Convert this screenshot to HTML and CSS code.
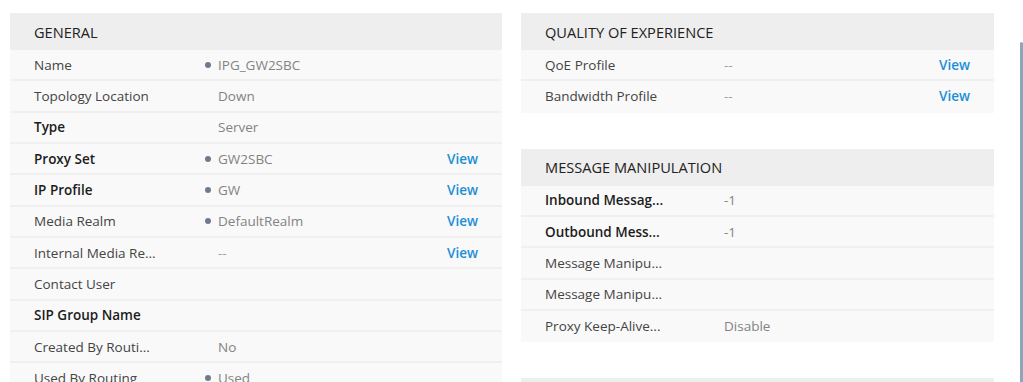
FILE: index.html
```html
<!DOCTYPE html>
<html lang="en">
<head>
  <meta charset="UTF-8">
  <title>SIP Interface Details</title>
  <link rel="stylesheet" href="styles.css">
</head>
<body>

  <div class="page">
    <div class="column column-left">
      <div class="panel">
        <div class="panel-title">GENERAL</div>
        <div class="row"><span class="label">Name</span><span class="value"><i class="dot"></i>IPG_GW2SBC</span></div>
        <div class="row"><span class="label">Topology Location</span><span class="value"><i class="slot"></i>Down</span></div>
        <div class="row"><span class="label strong">Type</span><span class="value"><i class="slot"></i>Server</span></div>
        <div class="row"><span class="label strong">Proxy Set</span><span class="value"><i class="dot"></i>GW2SBC</span><a class="view">View</a></div>
        <div class="row"><span class="label strong">IP Profile</span><span class="value"><i class="dot"></i>GW</span><a class="view">View</a></div>
        <div class="row"><span class="label">Media Realm</span><span class="value"><i class="dot"></i>DefaultRealm</span><a class="view">View</a></div>
        <div class="row"><span class="label">Internal Media Re...</span><span class="value empty"><i class="slot"></i>--</span><a class="view">View</a></div>
        <div class="row"><span class="label">Contact User</span><span class="value"></span></div>
        <div class="row"><span class="label strong">SIP Group Name</span><span class="value"></span></div>
        <div class="row"><span class="label">Created By Routi...</span><span class="value"><i class="slot"></i>No</span></div>
        <div class="row"><span class="label">Used By Routing</span><span class="value"><i class="dot"></i>Used</span></div>
      </div>
    </div>

    <div class="column column-right">
      <div class="panel">
        <div class="panel-title">QUALITY OF EXPERIENCE</div>
        <div class="row"><span class="label">QoE Profile</span><span class="value empty">--</span><a class="view">View</a></div>
        <div class="row"><span class="label">Bandwidth Profile</span><span class="value empty">--</span><a class="view">View</a></div>
      </div>

      <div class="panel">
        <div class="panel-title">MESSAGE MANIPULATION</div>
        <div class="row"><span class="label strong">Inbound Messag...</span><span class="value">-1</span></div>
        <div class="row"><span class="label strong">Outbound Mess...</span><span class="value">-1</span></div>
        <div class="row"><span class="label">Message Manipu...</span><span class="value"></span></div>
        <div class="row"><span class="label">Message Manipu...</span><span class="value"></span></div>
        <div class="row"><span class="label">Proxy Keep-Alive...</span><span class="value">Disable</span></div>
      </div>

      <div class="panel">
        <div class="panel-title"></div>
      </div>
    </div>
  </div>

  <div class="scroll-thumb"></div>

</body>
</html>
```

FILE: styles.css
```css
html, body {
  height: 100%;
  overflow: hidden;
}

body {
  margin: 0;
  background: #ffffff;
  font-family: 'Open Sans', 'Noto Sans', sans-serif;
  font-size: 13.5px;
  color: #555555;
}

.page {
  display: flex;
  gap: 19px;
  padding: 13px 0 0 10px;
}

.column {
  display: flex;
  flex-direction: column;
  gap: 36px;
}

.column-left { width: 492px; }
.column-right { width: 473px; }

.panel {
  background: #f9f9f9;
}

.panel-title {
  height: 37px;
  display: flex;
  align-items: center;
  padding: 0 24px;
  background: #eeeeee;
  color: #222222;
  font-size: 14.6px;
}

.row {
  box-sizing: border-box;
  height: 31.33px;
  padding: 0 24px;
  display: grid;
  grid-template-columns: 171px 1fr auto;
  align-items: center;
  border-bottom: 2px solid #f0f0f0;
}

.row:last-child {
  border-bottom-color: transparent;
}

.column-right .row {
  grid-template-columns: 179px 1fr auto;
}

.label {
  white-space: nowrap;
  color: #444444;
}

.label.strong {
  color: #1c1c1c;
  font-weight: 600;
}

.value {
  display: flex;
  align-items: center;
  color: #838383;
}

.value.empty { color: #a0a0a0; }

.dot, .slot {
  width: 13px;
  flex: none;
}

.dot::before {
  content: "";
  display: block;
  width: 6px;
  height: 6px;
  border-radius: 50%;
  background: #6f7b8c;
}

.view {
  color: #1b8fd6;
  font-weight: 600;
  cursor: pointer;
}

.scroll-thumb {
  position: absolute;
  top: 42px;
  right: 0;
  width: 3px;
  height: 360px;
  background: #8ea6ba;
  border-radius: 2px 2px 0 0;
}
```
